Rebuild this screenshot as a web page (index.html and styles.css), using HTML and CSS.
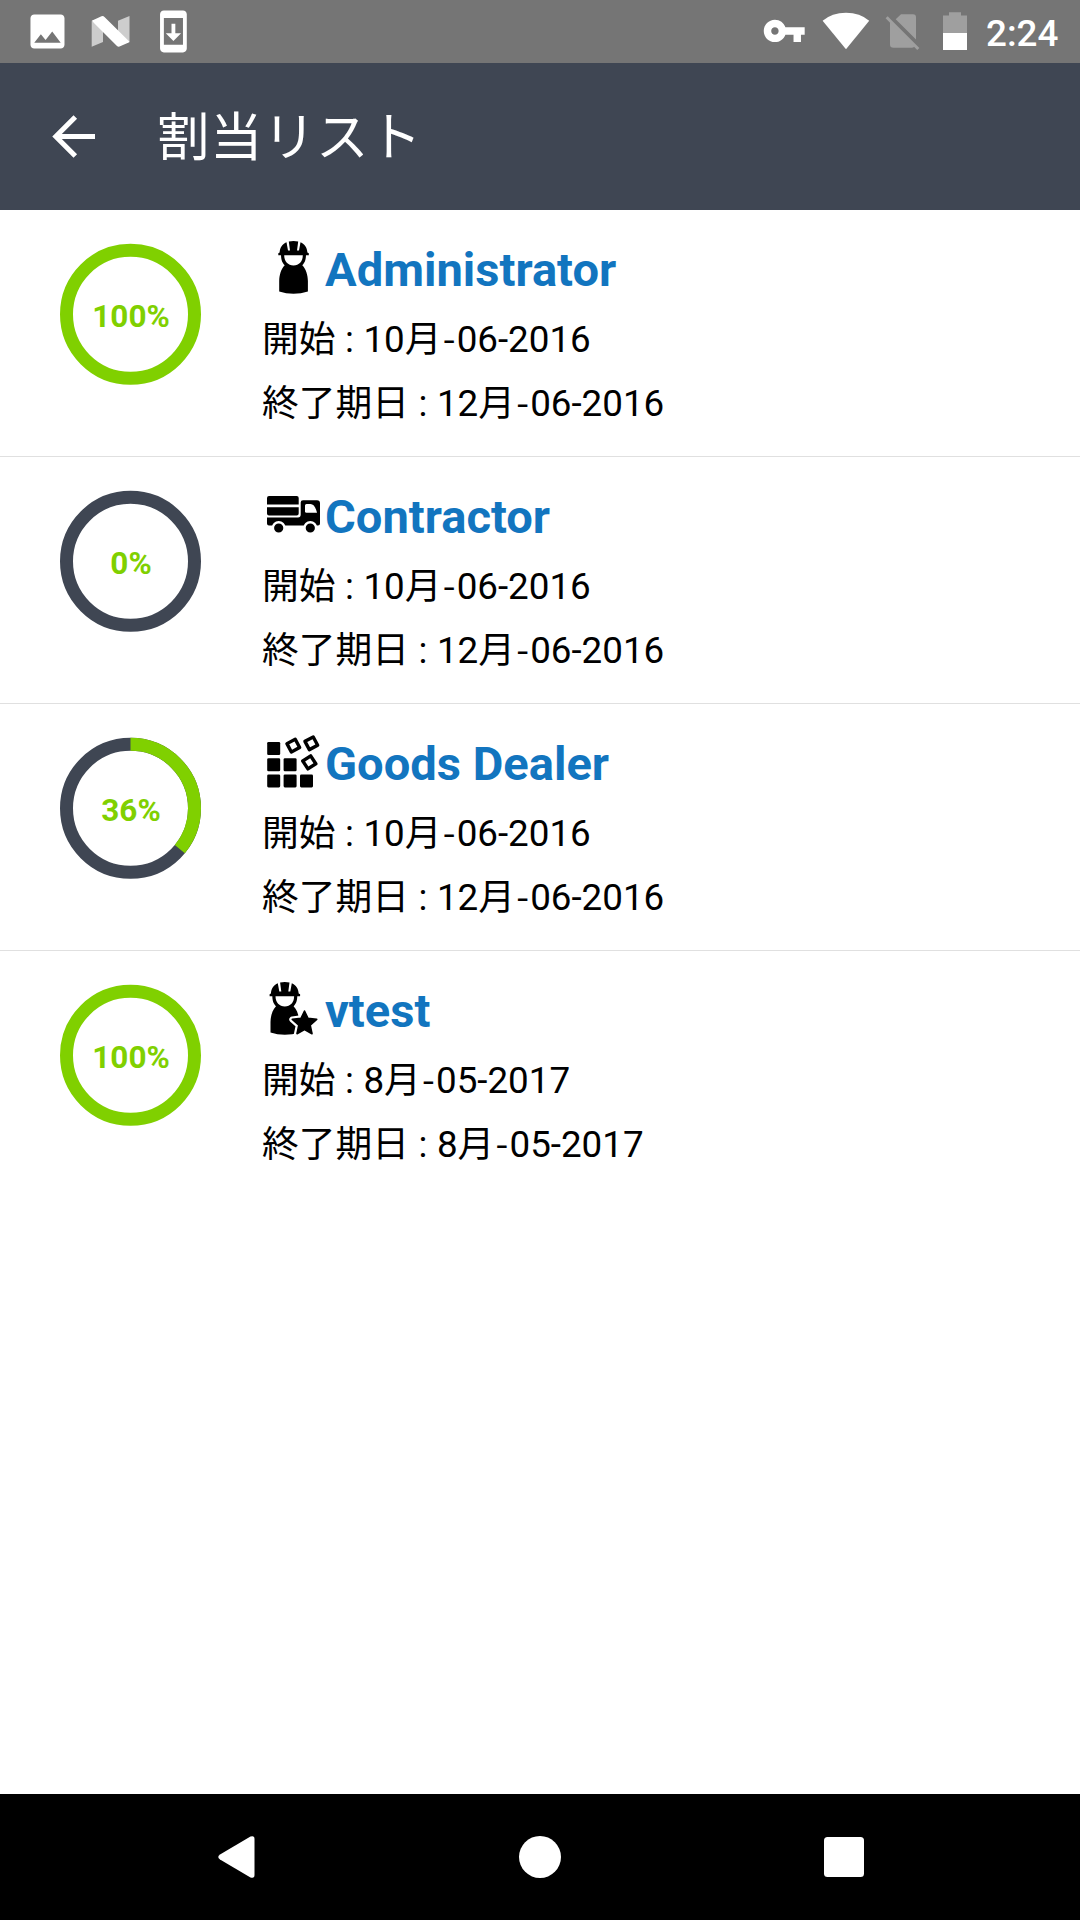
FILE: index.html
```html
<!DOCTYPE html>
<html lang="ja">
<head>
    <meta charset="UTF-8">
    <meta name="viewport" content="width=device-width, initial-scale=1.0">
    <title>割当リスト</title>
    <link rel="stylesheet" href="styles.css">
</head>
<body>
    <!-- shared worker icon -->
    <svg class="defs" width="0" height="0">
        <symbol id="worker" viewBox="0 0 60 56">
            <path d="M14.3 15.2V13.2L15.6 12.4C16 7.5 18.2 4 22.5 2.2L24 10.6H26L24.8 1.6Q29.5 .3 34.2 1.6L33 10.6H35L36.5 2.2C40.8 4 43 7.5 43.4 12.4L44.8 13.2V15.2Z"/>
            <path d="M17 14H42C42 19.5 41 22.5 38.3 25.2C42 29 43.8 35 43.9 41V51.5Q37 53.7 29.5 53.7T15.2 51.5V41C15.3 35 17 29 20.7 25.2C18 22.5 17 19.5 17 14Z"/>
            <path d="M20.2 15.3H38.8C38.8 21.5 35 25.5 29.5 25.5S20.2 21.5 20.2 15.3Z" fill="#fff"/>
        </symbol>
    </svg>

    <div class="status_bar">
        <svg class="ico_image" width="46" height="63" viewBox="25 0 46 63"><path transform="translate(24.8 8.8) scale(1.89)" d="M21 19V5c0-1.1-.9-2-2-2H5c-1.1 0-2 .9-2 2v14c0 1.1.9 2 2 2h14c1.1 0 2-.9 2-2zM8.5 13.5l2.5 3.01L14.5 12l4.5 6H5l3.5-4.5z"/></svg>
        <svg class="ico_n" width="50" height="63" viewBox="86 0 50 63">
            <path class="dim" d="M91.7 21V46.8L103 42V28zM118 20.7L129.5 16V42L118 34z"/>
            <path d="M91.7 20.7L101.5 16.2Q103.3 15.6 104.5 17L129.3 41.5V42.3L119.5 46.6Q118 47 116.7 45.8Z"/>
        </svg>
        <svg class="ico_update" width="46" height="63" viewBox="150 0 46 63"><path transform="translate(150.5 8.5) scale(1.91)" d="M17 1.01L7 1c-1.1 0-2 .9-2 2v18c0 1.1.9 2 2 2h10c1.1 0 2-.9 2-2V3c0-1.1-.9-1.99-2-1.99zM17 19H7V5h10v14zm-1-6h-3V8h-2v5H8l4 4 4-4z"/></svg>
        <span class="spacer"></span>
        <svg class="ico_key" width="46" height="63" viewBox="762 0 46 63"><path transform="translate(761.9 8.6) scale(1.86)" d="M12.65 10C11.83 7.67 9.61 6 7 6c-3.31 0-6 2.69-6 6s2.69 6 6 6c2.61 0 4.83-1.67 5.65-4H17v4h4v-4h2v-4H12.65zM7 14c-1.1 0-2-.9-2-2s.9-2 2-2 2 .9 2 2-.9 2-2 2z"/></svg>
        <svg class="ico_wifi" width="50" height="63" viewBox="821 0 50 63"><path d="M822.6 20.8Q832 12.8 846 12.8T869.2 20.8L846 49.2Z"/></svg>
        <svg class="ico_sim" width="38" height="63" viewBox="884 0 38 63">
            <path class="off" d="M901 14.3H913Q916 14.3 916 17.3V39.5L895.7 19.2ZM890 21.5L914.5 46.3Q914 47.7 912 47.7H893.5Q890 47.7 890 44.5Z"/>
            <path class="off_line" d="M886.6 17.3L918.3 49"/>
        </svg>
        <svg class="ico_battery" width="28" height="63" viewBox="941 0 28 63">
            <path class="off" d="M943 33V15.5H949V12.3H961V15.5H967V33Z"/>
            <path d="M943 33H967V50H943Z"/>
        </svg>
        <span class="clock">2:24</span>
    </div>

    <div class="header_row">
        <svg class="back" width="44" height="44" viewBox="0 0 44 44"><path d="M43 21.5H4M23.3 2L3.8 21.5L23.3 41"/></svg>
        <span class="title">割当リスト</span>
    </div>

    <div class="list">
        <div class="item">
            <div class="ring">
                <svg width="142" height="142" viewBox="0 0 142 142">
                    <circle class="track full" cx="71.5" cy="71.3" r="64"/>
                </svg>
                <span>100%</span>
            </div>
            <div class="info">
                <div class="name">
                    <svg width="60" height="56"><use href="#worker"/></svg>
                    <span>Administrator</span>
                </div>
                <p>開始 : 10<span class="month">月-</span>06-2016</p>
                <p>終了期日 : 12<span class="month">月-</span>06-2016</p>
            </div>
        </div>

        <div class="item">
            <div class="ring">
                <svg width="142" height="142" viewBox="0 0 142 142">
                    <circle class="track" cx="71.5" cy="71.3" r="64"/>
                </svg>
                <span>0%</span>
            </div>
            <div class="info">
                <div class="name">
                    <svg width="60" height="56" viewBox="0 0 60 56">
                        <path d="M3 17.4V11Q3 9 5 9H32.7Q34.7 9 34.7 11V17.4ZM3 20.3H34.7V26.4Q34.7 28.4 32.7 28.4H5Q3 28.4 3 26.4Z"/>
                        <path d="M3 30.5H34Q36.7 30.5 36.7 27.5V15.5Q36.7 13.3 39 13.3H53Q56 13.3 56 16.3V36.5Q56 38.5 54 38.5H5Q3 38.5 3 36.5Z"/>
                        <path fill="#fff" d="M41 18.5Q41 17 42.5 17H46.5Q51 17 53 25.8H42.5Q41 25.8 41 24.3Z"/>
                        <circle class="wheel" cx="14.7" cy="41" r="5.8"/>
                        <circle class="wheel" cx="46.3" cy="41" r="5.8"/>
                    </svg>
                    <span>Contractor</span>
                </div>
                <p>開始 : 10<span class="month">月-</span>06-2016</p>
                <p>終了期日 : 12<span class="month">月-</span>06-2016</p>
            </div>
        </div>

        <div class="item">
            <div class="ring">
                <svg width="142" height="142" viewBox="0 0 142 142">
                    <circle class="track" cx="71.5" cy="71.3" r="64"/>
                    <circle class="progress" cx="71.5" cy="71.3" r="64" pathLength="100" stroke-dasharray="36 64" transform="rotate(-90 71.5 71.3)"/>
                </svg>
                <span>36%</span>
            </div>
            <div class="info">
                <div class="name">
                    <svg width="60" height="56" viewBox="0 0 60 56">
                        <rect x="3.2" y="8" width="13" height="13" rx="1.3"/>
                        <rect x="3.2" y="24.2" width="13" height="13" rx="1.3"/>
                        <rect x="19.6" y="24.2" width="13" height="13" rx="1.3"/>
                        <rect x="3.2" y="40.4" width="13" height="13" rx="1.3"/>
                        <rect x="19.6" y="40.4" width="13" height="13" rx="1.3"/>
                        <rect x="36" y="40.4" width="13" height="13" rx="1.3"/>
                        <g class="box">
                            <rect x="24.6" y="6.9" width="9.4" height="9.4" transform="rotate(-28 29.3 11.6)"/>
                            <rect x="42.6" y="4.6" width="9.4" height="9.4" transform="rotate(-28 47.3 9.3)"/>
                            <rect x="40.6" y="23.7" width="9.4" height="9.4" transform="rotate(-33 45.3 28.4)"/>
                        </g>
                    </svg>
                    <span>Goods Dealer</span>
                </div>
                <p>開始 : 10<span class="month">月-</span>06-2016</p>
                <p>終了期日 : 12<span class="month">月-</span>06-2016</p>
            </div>
        </div>

        <div class="item">
            <div class="ring">
                <svg width="142" height="142" viewBox="0 0 142 142">
                    <circle class="track full" cx="71.5" cy="71.3" r="64"/>
                </svg>
                <span>100%</span>
            </div>
            <div class="info">
                <div class="name">
                    <svg width="60" height="56" viewBox="0 0 60 56">
                        <use href="#worker" x="-8.7" width="60" height="56"/>
                        <path class="star_gap" d="M40.5 30L44 37.3L52.7 38.4L46.2 44.2L48 52.7L40.5 48.5L33 52.7L34.8 44.2L28.3 38.4L37 37.3Z"/>
                        <path class="star" d="M40.5 30L44 37.3L52.7 38.4L46.2 44.2L48 52.7L40.5 48.5L33 52.7L34.8 44.2L28.3 38.4L37 37.3Z"/>
                    </svg>
                    <span>vtest</span>
                </div>
                <p>開始 : 8<span class="month">月-</span>05-2017</p>
                <p>終了期日 : 8<span class="month">月-</span>05-2017</p>
            </div>
        </div>
    </div>

    <div class="nav_bar">
        <svg width="42" height="44" viewBox="0 0 42 44"><path d="M3 19.5L33.5 1.6Q37.5 .2 37.5 4V40Q37.5 43.8 33.5 42.4L3 24.5Q-.5 22 3 19.5Z"/></svg>
        <svg width="42" height="42" viewBox="0 0 42 42"><circle cx="21" cy="21" r="21"/></svg>
        <svg width="40" height="40" viewBox="0 0 40 40"><rect width="40" height="40" rx="3.5"/></svg>
    </div>
</body>
</html>
```
FILE: styles.css
```css
* {padding:0;margin:0;box-sizing:border-box;}
html,body {width:100%;height:100%;}
body {
    display:flex;
    flex-direction:column;
    background:#fff;
    color:#000;
    font-family:Roboto,"Noto Sans CJK JP",sans-serif;
    overflow:hidden;
}
svg {display:block;flex:none;}
.defs {position:absolute;}

/* status bar */
.status_bar {display:flex;align-items:center;height:63px;flex:none;padding:0 20px 0 25px;background:#757575;}
.status_bar svg {fill:#fff;}
.ico_n {margin:0 14px 0 15px;}
.status_bar .dim {fill:#cdcdcd;}
.status_bar .off {fill:#9f9f9f;}
.off_line {stroke:#9f9f9f;stroke-width:3;}
.spacer {flex:1;}
.ico_wifi {margin:0 13px;}
.ico_battery {margin-left:19px;}
.clock {width:74px;margin-left:17px;font-size:36.75px;font-weight:500;line-height:63px;color:#fff;padding-top:3px;white-space:nowrap;}

/* header */
.header_row {display:flex;align-items:center;height:147px;flex:none;padding-left:52px;background:#3f4653;color:#fff;}
.back {fill:none;stroke:#fff;stroke-width:5;}
.title {margin-left:61px;font-size:52.5px;line-height:76px;letter-spacing:.5px;padding-top:3px;}

/* list */
.list {flex:1;}
.item {display:flex;height:247px;padding:33px 0 0 59px;border-bottom:1px solid #e0e0e0;}
.item:last-child {border-bottom:0;}
.ring {display:grid;width:142px;height:142px;place-items:center;}
.ring svg,.ring span {grid-area:1/1;}
.ring svg {overflow:visible;}
.ring circle {fill:none;stroke-width:13;}
.ring .track {stroke:#3f4653;}
.ring .full,.ring .progress {stroke:#80d000;}
.ring span {font-size:31.5px;font-weight:700;color:#80d000;padding:4px 0 0 2px;}
.info {margin:-3px 0 0 61px;}
.name {display:flex;height:68px;padding-left:2px;}
.name span {font-size:47.1px;font-weight:700;line-height:56px;color:#1275bf;padding:2px 0 0 1px;}
.wheel {stroke:#fff;stroke-width:2.4;}
.box {fill:none;stroke:#000;stroke-width:3.4;stroke-linejoin:round;}
.star {stroke:#000;stroke-width:1.6;stroke-linejoin:round;}
.star_gap {fill:#fff;stroke:#fff;stroke-width:6;stroke-linejoin:round;}
.info p {height:64px;font-size:36.75px;line-height:64px;word-spacing:.4px;white-space:nowrap;}
.month {font-family:"Noto Sans CJK JP",sans-serif;letter-spacing:1.2px;line-height:1;}

/* navigation buttons */
.nav_bar {display:flex;align-items:center;justify-content:space-between;height:126px;flex:none;padding:0 216px 0 217px;background:#000;}
.nav_bar svg {fill:#fff;}
.nav_bar svg:nth-child(2) {margin:0 1px 0 -3px;}
```
